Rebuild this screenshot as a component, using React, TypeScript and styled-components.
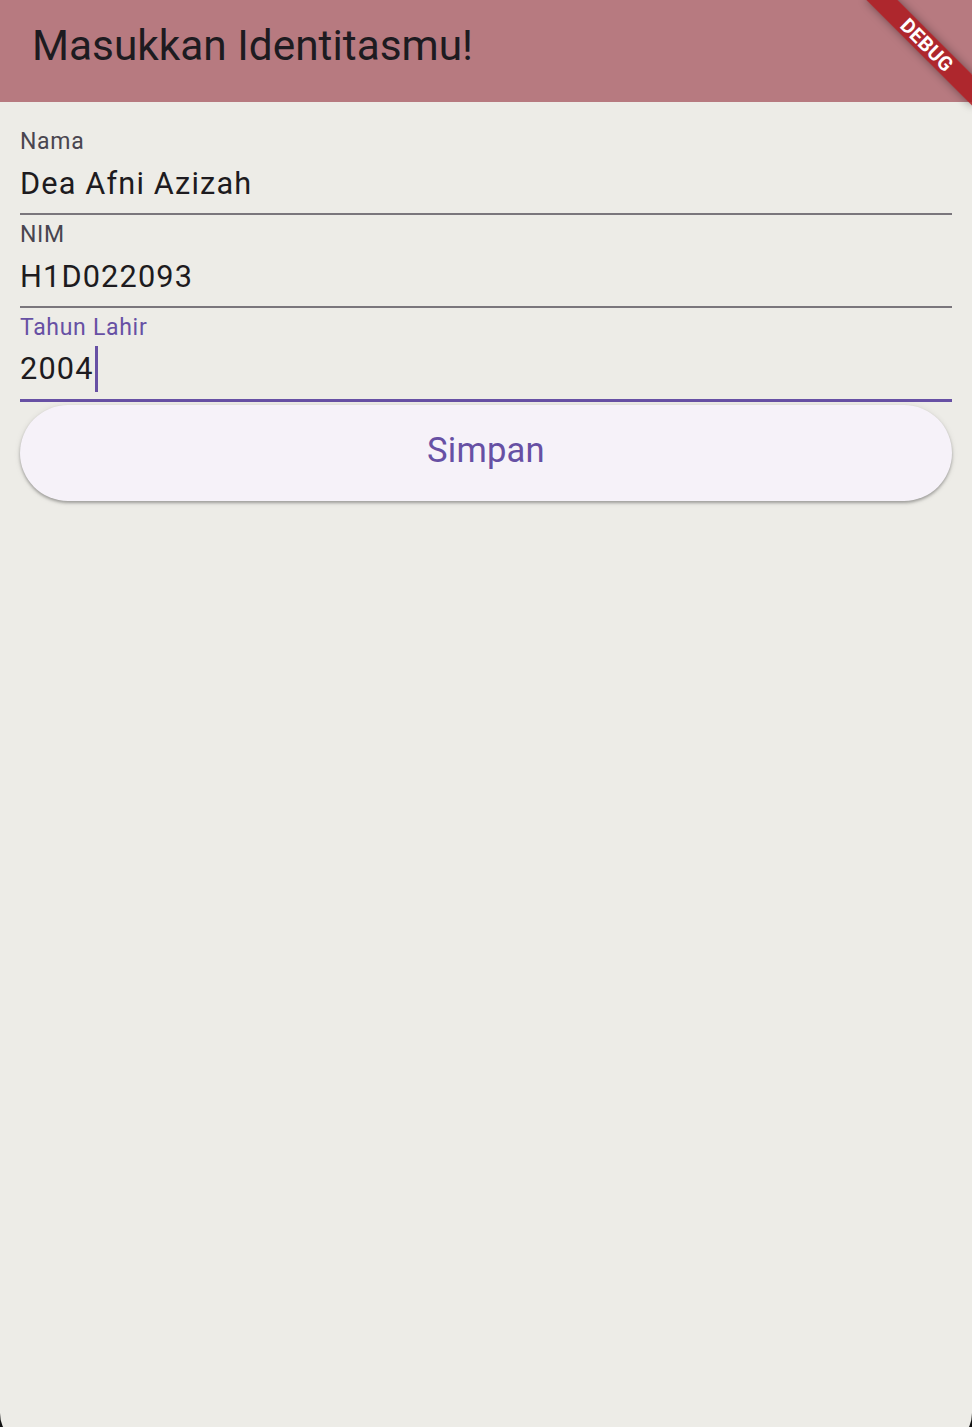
import React from "react";
import styled, { createGlobalStyle } from "styled-components";

const GlobalStyle = createGlobalStyle`
  html, body {
    margin: 0;
    padding: 0;
    background: #141414;
    overflow: hidden;
  }
  body {
    font-family: Roboto, "Noto Sans", Arial, sans-serif;
  }
`;

const Screen = styled.div`
  position: relative;
  height: 1447px;
  background: #edece7;
  border-radius: 0 0 34px 34px;
  overflow: hidden;
`;

const AppBar = styled.header`
  height: 102px;
  box-sizing: border-box;
  padding: 21px 32px 0;
  background: #b77a80;
`;

const Title = styled.h1`
  margin: 0;
  font-size: 42.4px;
  line-height: 50px;
  font-weight: 400;
  color: #1d1b20;
`;

const Form = styled.main`
  display: flex;
  flex-direction: column;
  padding: 20.6px 20px 0;
`;

const Field = styled.div<{ $focused?: boolean }>`
  display: flex;
  flex-direction: column;
  padding: 5.8px 0 11.3px;
  border-bottom: ${(p) => (p.$focused ? "3px solid #6750a4" : "2px solid #7a767c")};
`;

const Label = styled.label<{ $focused?: boolean }>`
  font-size: 23px;
  line-height: 27px;
  letter-spacing: 0.7px;
  color: ${(p) => (p.$focused ? "#6750a4" : "#49454f")};
`;

const Value = styled.div`
  display: flex;
  align-items: center;
  margin-top: 10.6px;
  height: 36px;
  font-size: 30.7px;
  line-height: 36px;
  letter-spacing: 1.15px;
  color: #1d1b20;
`;

const Cursor = styled.span`
  display: inline-block;
  width: 3px;
  height: 46px;
  margin-left: 1px;
  background: #6750a4;
`;

const SaveButton = styled.button`
  margin-top: 3px;
  height: 96px;
  border: none;
  border-radius: 48px;
  background: #f6f2f9;
  color: #6750a4;
  font-family: Roboto, "Noto Sans", Arial, sans-serif;
  font-size: 34.6px;
  letter-spacing: 0.2px;
  padding: 0 0 5px;
  box-shadow: 0 2px 3px rgba(0, 0, 0, 0.28), 0 1px 6px rgba(0, 0, 0, 0.1);
  cursor: pointer;
`;

const BannerCorner = styled.div`
  position: absolute;
  top: 0;
  right: 0;
  width: 150px;
  height: 150px;
  overflow: hidden;
  pointer-events: none;
`;

const Banner = styled.div`
  position: absolute;
  left: 30px;
  top: 34px;
  width: 150px;
  height: 22px;
  transform: rotate(45deg);
  background: rgba(172, 26, 32, 0.86);
  box-shadow: 0 0 10px rgba(0, 0, 0, 0.4);
  display: flex;
  align-items: center;
  justify-content: center;
  color: #fff;
  font-family: Roboto, "Noto Sans", Arial, sans-serif;
  font-weight: 700;
  font-size: 20px;
  line-height: 20px;
  letter-spacing: 0.3px;
`;

const fields = [
  { label: "Nama", value: "Dea Afni Azizah" },
  { label: "NIM", value: "H1D022093" },
  { label: "Tahun Lahir", value: "2004", focused: true },
];

export default function App() {
  return (
    <>
      <GlobalStyle />
      <Screen>
        <AppBar>
          <Title>Masukkan Identitasmu!</Title>
        </AppBar>
        <Form>
          {fields.map((f) => (
            <Field key={f.label} $focused={f.focused}>
              <Label $focused={f.focused}>{f.label}</Label>
              <Value>
                {f.value}
                {f.focused && <Cursor />}
              </Value>
            </Field>
          ))}
          <SaveButton>Simpan</SaveButton>
        </Form>
        <BannerCorner>
          <Banner>DEBUG</Banner>
        </BannerCorner>
      </Screen>
    </>
  );
}
